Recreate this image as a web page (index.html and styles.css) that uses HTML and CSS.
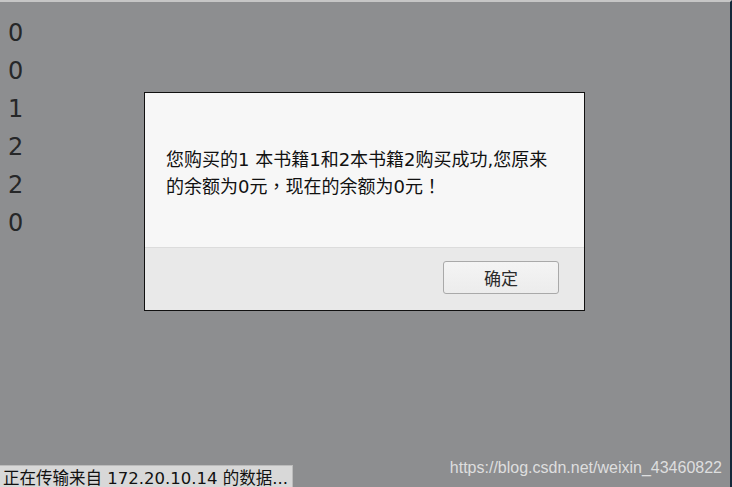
FILE: index.html
```html
<!DOCTYPE html>
<html lang="zh-CN">
<head>
    <meta charset="UTF-8">
    <meta name="viewport" content="width=device-width, initial-scale=1.0">
    <title>购买结果</title>
    <link rel="stylesheet" href="styles.css">
</head>
<body>

<div class="page">
    <div class="counts">
        <div>0</div>
        <div>0</div>
        <div>1</div>
        <div>2</div>
        <div>2</div>
        <div>0</div>
    </div>
</div>

<div class="dialog">
    <div class="dialog-body">
        <p class="message">您购买的1 本书籍1和2本书籍2购买成功,您原来的余额为0元<span class="punct" lang="zh-TW">，</span>现在的余额为0元<span class="punct" lang="zh-TW">！</span></p>
    </div>
    <div class="dialog-footer">
        <button class="btn-ok">确定</button>
    </div>
</div>

<div class="status">正在传输来自 172.20.10.14 的数据...</div>
<div class="watermark">https://blog.csdn.net/weixin_43460822</div>

</body>
</html>
```

FILE: styles.css
```css
html, body {
    margin: 0;
    height: 100%;
}

body {
    background-color: #8d8e90;
    border-top: 2px solid #c6c6c6;
    border-right: 2px solid #15293b;
    box-sizing: border-box;
    overflow: hidden;
    position: relative;
    font-family: "DejaVu Sans", "Noto Sans CJK SC", sans-serif;
}

.page {
    padding: 12px 8px;
}

.counts {
    font-size: 24px;
    line-height: 38px;
    color: #262728;
}

/* fenetre d'alerte par-dessus la page */
.dialog {
    position: absolute;
    left: 144px;
    top: 90px;
    width: 439px;
    border: 1px solid #111;
    background-color: #f7f7f7;
}

.dialog-body {
    height: 101px;
    padding: 53px 20px 0 21px;
}

.message {
    margin: 0;
    font-size: 18px;
    line-height: 27px;
    color: #111;
}

/* ponctuation pleine chasse centree */
.punct {
    font-family: "Noto Sans CJK TC", sans-serif;
    line-height: 1;
}

.dialog-footer {
    height: 63px;
    background-color: #e9e9e9;
    border-top: 1px solid #dcdcdc;
    display: flex;
    justify-content: flex-end;
    align-items: flex-start;
    padding: 13px 25px 0 0;
    box-sizing: border-box;
}

.btn-ok {
    width: 116px;
    height: 33px;
    border: 1px solid #a9a9a9;
    border-radius: 3px;
    background: linear-gradient(#f4f4f4, #ececec);
    font-family: "DejaVu Sans", "Noto Sans CJK SC", sans-serif;
    font-size: 17px;
    color: #2b2b2b;
    padding: 0;
}

.status {
    position: absolute;
    left: 0;
    bottom: 0;
    width: 289px;
    height: 21px;
    padding-left: 3px;
    background-color: #d8d8d8;
    border-top: 1px solid #bcbcbc;
    border-right: 1px solid #bcbcbc;
    font-size: 16.5px;
    line-height: 26px;
    color: #111;
    white-space: nowrap;
    overflow: hidden;
}

.watermark {
    position: absolute;
    right: 8px;
    bottom: 10px;
    font-family: "Liberation Sans", Arial, sans-serif;
    font-size: 16px;
    color: rgba(255, 255, 255, 0.72);
}
```
